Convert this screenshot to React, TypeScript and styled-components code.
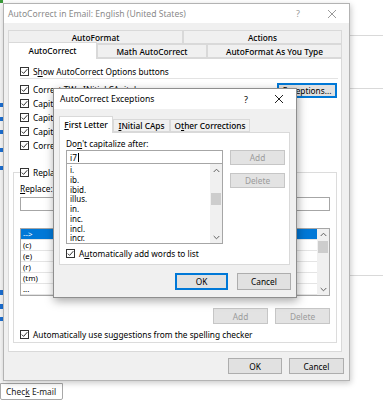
import React from "react";
import styled, { createGlobalStyle } from "styled-components";

const GlobalStyle = createGlobalStyle`
  html, body { margin: 0; padding: 0; background: #ffffff; }
  body { font-family: "Noto Sans", "Open Sans", sans-serif; font-size: 8.3px; color: #000; }
  * { box-sizing: border-box; }
`;

const Screen = styled.div`
  position: relative;
  width: 383px;
  height: 400px;
  overflow: hidden;
  background: #fff;
`;

/* ---------- background application ---------- */
const Backdrop = styled.div`
  display: flex;
  flex-direction: column;
  height: 100%;
`;
const BackdropTop = styled.div`
  display: grid;
  grid-template-columns: 4px 1fr;
  height: 383px;
`;
const AppStrip = styled.div`
  display: flex;
  flex-direction: column;
  background: #f6f6f6;
`;
const StripMark = styled.div<{ $gap: number; $h: number; $c?: string }>`
  margin-top: ${(p) => p.$gap}px;
  height: ${(p) => p.$h}px;
  width: 3px;
  background: ${(p) => p.$c ?? "#1c6fd1"};
`;
const AppArea = styled.div`
  display: flex;
  flex-direction: column;
`;
const Rule = styled.div<{ $gap: number }>`
  margin-top: ${(p) => p.$gap}px;
  height: 1px;
  background: #d9d9d9;
`;
const CheckEmail = styled.div`
  align-self: flex-start;
  width: 63px;
  height: 17px;
  display: flex;
  align-items: center;
  padding-left: 5px;
  border: 1px solid #a8a8a8;
  border-radius: 0 0 2px 2px;
  background: #fff;
  color: #222;
  font-size: 8.4px;
  white-space: nowrap;
`;

/* ---------- windows ---------- */
const Window = styled.div<{ $x: number; $y: number; $w: number; $h: number; $active?: boolean }>`
  position: absolute;
  left: ${(p) => p.$x}px;
  top: ${(p) => p.$y}px;
  width: ${(p) => p.$w}px;
  height: ${(p) => p.$h}px;
  display: flex;
  flex-direction: column;
  background: #f0f0f0;
  border: 1px solid ${(p) => (p.$active ? "#8e8e8e" : "#b3b3b3")};
  box-shadow: ${(p) =>
    p.$active ? "1px 3px 9px rgba(0,0,0,0.35)" : "1px 2px 6px rgba(0,0,0,0.22)"};
`;
const TitleBar = styled.div<{ $h: number }>`
  display: flex;
  align-items: center;
  height: ${(p) => p.$h}px;
  flex-shrink: 0;
  background: #fff;
`;
const TitleText = styled.div<{ $active?: boolean }>`
  flex: 1;
  padding-left: ${(p) => (p.$active ? 6 : 4)}px;
  color: ${(p) => (p.$active ? "#000" : "#8a8a8a")};
  font-size: 8.6px;
  white-space: nowrap;
`;
const TitleButton = styled.div<{ $w: number; $active?: boolean }>`
  width: ${(p) => p.$w}px;
  height: 100%;
  display: flex;
  align-items: center;
  justify-content: center;
  color: ${(p) => (p.$active ? "#000" : "#9a9a9a")};
  font-size: 9px;
`;
const WindowBody = styled.div<{ $pad: string }>`
  display: flex;
  flex-direction: column;
  padding: ${(p) => p.$pad};
`;

/* ---------- tabs ---------- */
const TabRow = styled.div<{ $h: number }>`
  display: flex;
  align-items: flex-end;
  height: ${(p) => p.$h}px;
`;
const Tab = styled.div<{ $w: number; $h: number; $selected?: boolean }>`
  position: relative;
  z-index: ${(p) => (p.$selected ? 3 : 1)};
  width: ${(p) => p.$w}px;
  height: ${(p) => p.$h}px;
  margin-bottom: ${(p) => (p.$selected ? -1 : 0)}px;
  display: flex;
  align-items: center;
  justify-content: center;
  background: ${(p) => (p.$selected ? "#fff" : "#f0f0f0")};
  border: 1px solid #d9d9d9;
  border-bottom: ${(p) => (p.$selected ? "none" : "1px solid #d9d9d9")};
  white-space: nowrap;
  font-weight: 500;
  padding-bottom: ${(p) => (p.$selected ? 1 : 0)}px;
`;
const Panel = styled.div<{ $w: number; $h: number; $pad: string }>`
  width: ${(p) => p.$w}px;
  height: ${(p) => p.$h}px;
  display: flex;
  flex-direction: column;
  background: #fff;
  border: 1px solid #d9d9d9;
  padding: ${(p) => p.$pad};
`;

/* ---------- controls ---------- */
const U = styled.span`
  text-decoration: underline;
  text-underline-offset: 1px;
`;
const CheckRow = styled.div<{ $h?: number }>`
  display: flex;
  align-items: center;
  gap: 4px;
  height: ${(p) => p.$h ?? 14}px;
  white-space: nowrap;
`;
const BoxFrame = styled.span`
  width: 9px;
  height: 9px;
  flex-shrink: 0;
  display: inline-flex;
  border: 1px solid #333;
  background: #fff;
`;
const Check = () => (
  <BoxFrame>
    <svg width="7" height="7" viewBox="0 0 7 7">
      <path d="M0.8 3.6 L2.6 5.4 L6.3 1.2" fill="none" stroke="#333" strokeWidth="1" />
    </svg>
  </BoxFrame>
);
const Button = styled.div<{ $w: number; $h: number; $disabled?: boolean; $focused?: boolean; $mt?: number }>`
  width: ${(p) => p.$w}px;
  height: ${(p) => p.$h}px;
  margin-top: ${(p) => p.$mt ?? 0}px;
  display: flex;
  align-items: center;
  justify-content: center;
  background: ${(p) => (p.$disabled ? "#e3e3e3" : "#e1e1e1")};
  border: ${(p) => (p.$focused ? "2px solid #0078d7" : `1px solid ${p.$disabled ? "#c6c6c6" : "#adadad"}`)};
  color: ${(p) => (p.$disabled ? "#9b9b9b" : "#000")};
  white-space: nowrap;
  flex-shrink: 0;
`;
const Footer = styled.div<{ $mt: number; $gap: number; $pr: number }>`
  display: flex;
  justify-content: flex-end;
  gap: ${(p) => p.$gap}px;
  margin-top: ${(p) => p.$mt}px;
  padding-right: ${(p) => p.$pr}px;
`;
const Separator = styled.div`
  height: 1px;
  background: #e3e3e3;
  margin-right: -1px;
`;

/* ---------- main panel ---------- */
const TopArea = styled.div`
  display: flex;
  flex-direction: column;
  padding-left: 7px;
`;
const OptionsGrid = styled.div`
  display: grid;
  grid-template-columns: 1fr 60px;
  margin-top: 3px;
`;
const OptionsList = styled.div`
  display: flex;
  flex-direction: column;
`;
const GroupBox = styled.div`
  display: flex;
  flex-direction: column;
  margin-top: 20px;
  height: 171px;
  border: 1px solid #dcdcdc;
  padding: 0 6px;
`;
const GroupHeader = styled.div`
  align-self: flex-start;
  margin-top: -7px;
  padding-right: 2px;
  background: #fff;
`;
const FieldLabels = styled.div`
  display: grid;
  grid-template-columns: 75px 1fr;
  gap: 5px;
  height: 12px;
  align-items: center;
  margin-top: 3px;
`;
const FieldInputs = styled.div`
  display: grid;
  grid-template-columns: 75px 1fr;
  gap: 5px;
  margin-top: 3px;
`;
const TextBox = styled.div<{ $h: number }>`
  height: ${(p) => p.$h}px;
  display: flex;
  align-items: center;
  padding-left: 3px;
  border: 1px solid #a6a6a6;
  background: #fff;
`;
const Caret = styled.span`
  width: 1px;
  height: 9px;
  background: #000;
  margin-left: 1px;
`;
const ListBox = styled.div<{ $h: number; $mt?: number }>`
  display: flex;
  height: ${(p) => p.$h}px;
  margin-top: ${(p) => p.$mt ?? 0}px;
  border: 1px solid #a6a6a6;
  background: #fff;
`;
const ListRows = styled.div<{ $pt?: number }>`
  flex: 1;
  display: flex;
  flex-direction: column;
  padding-top: ${(p) => p.$pt ?? 0}px;
  overflow: hidden;
`;
const ReplaceRow = styled.div<{ $selected?: boolean }>`
  display: grid;
  grid-template-columns: 75px 1fr;
  height: 11px;
  flex-shrink: 0;
  border-bottom: 1px solid #e4e4e4;
  background: ${(p) => (p.$selected ? "#0078d7" : "#fff")};
  color: ${(p) => (p.$selected ? "#fff" : "#000")};
`;
const Cell = styled.div<{ $divider?: boolean }>`
  display: flex;
  align-items: center;
  padding-left: 2px;
  font-size: 7.8px;
  border-right: ${(p) => (p.$divider ? "1px solid #e4e4e4" : "none")};
`;
const ScrollBar = styled.div`
  width: 12px;
  display: flex;
  flex-direction: column;
  align-items: center;
  background: #f0f0f0;
`;
const Arrow = styled.div<{ $h: number }>`
  height: ${(p) => p.$h}px;
  display: flex;
  align-items: center;
  justify-content: center;
  flex-shrink: 0;
`;
const Thumb = styled.div<{ $mt: number; $h: number }>`
  margin-top: ${(p) => p.$mt}px;
  width: 10px;
  height: ${(p) => p.$h}px;
  background: #cdcdcd;
`;
const Spacer = styled.div`
  flex: 1;
`;
const ButtonRow = styled.div<{ $mt: number; $gap: number }>`
  display: flex;
  justify-content: flex-end;
  gap: ${(p) => p.$gap}px;
  margin-top: ${(p) => p.$mt}px;
`;

/* ---------- exceptions panel ---------- */
const ExcLabel = styled.div`
  height: 12px;
  display: flex;
  align-items: center;
`;
const ExcGrid = styled.div`
  display: grid;
  grid-template-columns: 157px 55px;
  gap: 7px;
  margin-top: 1px;
`;
const ExcColumn = styled.div<{ $gap?: number }>`
  display: flex;
  flex-direction: column;
  gap: ${(p) => p.$gap ?? 0}px;
`;
const ExcItem = styled.div`
  height: 9.75px;
  line-height: 9.75px;
  padding-left: 3px;
  font-size: 8px;
  flex-shrink: 0;
`;

const Chevron = ({ up }: { up?: boolean }) => (
  <svg width="7" height="5" viewBox="0 0 7 5">
    <path
      d={up ? "M0.7 4 L3.5 1.2 L6.3 4" : "M0.7 1 L3.5 3.8 L6.3 1"}
      fill="none"
      stroke="#606060"
      strokeWidth="1"
    />
  </svg>
);
const CloseGlyph = ({ color }: { color: string }) => (
  <svg width="10" height="10" viewBox="0 0 10 10">
    <path d="M1 1 L9 9 M9 1 L1 9" stroke={color} strokeWidth="1" />
  </svg>
);

const replacements: [string, string][] = [
  ["-->", "→"],
  ["(c)", "©"],
  ["(e)", "€"],
  ["(r)", "®"],
  ["(tm)", "™"],
  ["...", "…"],
];
const exceptions = ["i.", "ib.", "ibid.", "illus.", "in.", "inc.", "incl.", "incr."];

export default function App() {
  return (
    <Screen>
      <GlobalStyle />
      <Backdrop>
        <BackdropTop>
          <AppStrip>
            <StripMark $gap={0} $h={3} $c="#3a9a3a" />
            <StripMark $gap={100} $h={4} />
            <StripMark $gap={10} $h={4} />
            <StripMark $gap={9} $h={4} />
            <StripMark $gap={14} $h={4} />
            <StripMark $gap={14} $h={4} />
            <StripMark $gap={120} $h={5} />
            <StripMark $gap={9} $h={5} />
            <StripMark $gap={8} $h={4} />
          </AppStrip>
          <AppArea>
            <Rule $gap={35} />
            <Rule $gap={52} />
            <Rule $gap={186} />
          </AppArea>
        </BackdropTop>
        <CheckEmail>
          Chec<U>k</U>&nbsp;E-mail
        </CheckEmail>
      </Backdrop>

      {/* main AutoCorrect window (inactive) */}
      <Window $x={3} $y={3} $w={347} $h={378}>
        <TitleBar $h={19}>
          <TitleText>AutoCorrect in Email: English (United States)</TitleText>
          <TitleButton $w={34}>?</TitleButton>
          <TitleButton $w={34}>
            <CloseGlyph color="#9a9a9a" />
          </TitleButton>
        </TitleBar>
        <WindowBody $pad="7px 0 0 4px">
          <TabRow $h={14}>
            <Tab $w={175} $h={14}>AutoFormat</Tab>
            <Tab $w={159} $h={14}>Actions</Tab>
          </TabRow>
          <TabRow $h={14}>
            <Tab $w={89} $h={17} $selected>
              AutoCorrect
            </Tab>
            <Tab $w={110} $h={14}>Math AutoCorrect</Tab>
            <Tab $w={135} $h={14}>AutoFormat As You Type</Tab>
          </TabRow>
          <Panel $w={334} $h={294} $pad="6px 4px 0 4px">
            <TopArea>
              <CheckRow $h={13}>
                <Check />
                <span>
                  S<U>h</U>ow AutoCorrect Options buttons
                </span>
              </CheckRow>
              <Separator />
              <OptionsGrid>
                <OptionsList>
                  <CheckRow>
                    <Check />
                    <span>Correct TWo INitial CApitals</span>
                  </CheckRow>
                  <CheckRow>
                    <Check />
                    <span>Capitalize first letter of sentences</span>
                  </CheckRow>
                  <CheckRow>
                    <Check />
                    <span>Capitalize first letter of table cells</span>
                  </CheckRow>
                  <CheckRow>
                    <Check />
                    <span>Capitalize names of days</span>
                  </CheckRow>
                  <CheckRow>
                    <Check />
                    <span>Correct accidental usage of cAPS LOCK key</span>
                  </CheckRow>
                </OptionsList>
                <Button $w={60} $h={15} $focused $mt={1}>
                  E<U>x</U>ceptions...
                </Button>
              </OptionsGrid>
            </TopArea>
            <GroupBox>
              <GroupHeader>
                <CheckRow $h={13}>
                  <Check />
                  <span>
                    Replace <U>t</U>ext as you type
                  </span>
                </CheckRow>
              </GroupHeader>
              <FieldLabels>
                <span>
                  <U>R</U>eplace:
                </span>
                <span>
                  <U>W</U>ith:
                </span>
              </FieldLabels>
              <FieldInputs>
                <TextBox $h={14} />
                <TextBox $h={14} />
              </FieldInputs>
              <ListBox $h={68} $mt={17}>
                <ListRows>
                  {replacements.map(([a, b], i) => (
                    <ReplaceRow key={a} $selected={i === 0}>
                      <Cell $divider>{a}</Cell>
                      <Cell>{b}</Cell>
                    </ReplaceRow>
                  ))}
                </ListRows>
                <ScrollBar>
                  <Arrow $h={11}>
                    <Chevron up />
                  </Arrow>
                  <Thumb $mt={1} $h={12} />
                  <Spacer />
                  <Arrow $h={11}>
                    <Chevron />
                  </Arrow>
                </ScrollBar>
              </ListBox>
              <ButtonRow $mt={12} $gap={7}>
                <Button $w={55} $h={16} $disabled>
                  Add
                </Button>
                <Button $w={55} $h={16} $disabled>
                  Delete
                </Button>
              </ButtonRow>
              <CheckRow $h={12} style={{ marginTop: 4 }}>
                <Check />
                <span>
                  Automatically use su<U>g</U>gestions from the spelling checker
                </span>
              </CheckRow>
            </GroupBox>
          </Panel>
          <Footer $mt={6} $gap={7} $pr={5}>
            <Button $w={54} $h={16}>
              OK
            </Button>
            <Button $w={55} $h={16}>
              Cancel
            </Button>
          </Footer>
        </WindowBody>
      </Window>

      {/* AutoCorrect Exceptions dialog (active, modal) */}
      <Window $x={53} $y={88} $w={244} $h={210} $active>
        <TitleBar $h={20}>
          <TitleText $active>AutoCorrect Exceptions</TitleText>
          <TitleButton $w={32} $active>
            ?
          </TitleButton>
          <TitleButton $w={34} $active>
            <CloseGlyph color="#222" />
          </TitleButton>
        </TitleBar>
        <WindowBody $pad="7px 0 0 5px">
          <TabRow $h={16}>
            <Tab $w={54} $h={17} $selected>
              <span>
                <U>F</U>irst Letter
              </span>
            </Tab>
            <Tab $w={57} $h={13}>
              <span>
                <U>I</U>Nitial CAps
              </span>
            </Tab>
            <Tab $w={80} $h={13}>
              <span>
                O<U>t</U>her Corrections
              </span>
            </Tab>
          </TabRow>
          <Panel $w={231} $h={133} $pad="4px 0 0 6px">
            <ExcLabel>
              <span>
                Do<U>n</U>'t capitalize after:
              </span>
            </ExcLabel>
            <ExcGrid>
              <ExcColumn>
                <TextBox $h={14}>
                  i7
                  <Caret />
                </TextBox>
                <ListBox $h={81} style={{ marginTop: -1 }}>
                  <ListRows $pt={1}>
                    {exceptions.map((e) => (
                      <ExcItem key={e}>{e}</ExcItem>
                    ))}
                  </ListRows>
                  <ScrollBar>
                    <Arrow $h={13}>
                      <Chevron up />
                    </Arrow>
                    <Thumb $mt={16} $h={12} />
                    <Spacer />
                    <Arrow $h={12}>
                      <Chevron />
                    </Arrow>
                  </ScrollBar>
                </ListBox>
              </ExcColumn>
              <ExcColumn $gap={8}>
                <Button $w={55} $h={15} $disabled>
                  Add
                </Button>
                <Button $w={55} $h={15} $disabled>
                  Delete
                </Button>
              </ExcColumn>
            </ExcGrid>
            <CheckRow $h={12} style={{ marginTop: 3 }}>
              <Check />
              <span>
                A<U>u</U>tomatically add words to list
              </span>
            </CheckRow>
          </Panel>
          <Footer $mt={8} $gap={9} $pr={5}>
            <Button $w={53} $h={17} $focused>
              OK
            </Button>
            <Button $w={54} $h={17}>
              Cancel
            </Button>
          </Footer>
        </WindowBody>
      </Window>
    </Screen>
  );
}
